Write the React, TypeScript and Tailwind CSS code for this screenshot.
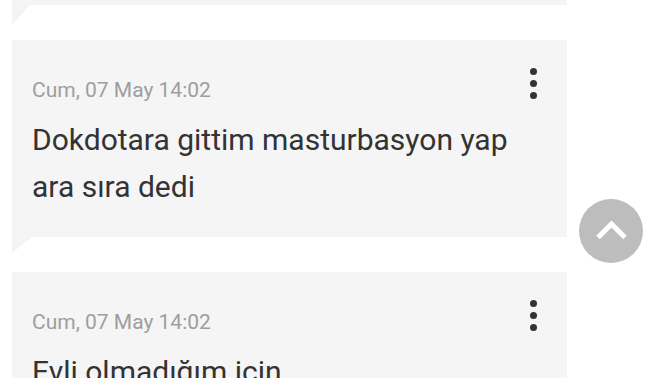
const POSTS = [
  {
    date: "Cum, 07 May 14:02",
    lines: ["Dokdotara gittim masturbasyon yap ara sıra dedi"],
  },
  {
    date: "Cum, 07 May 14:02",
    lines: ["Evli olmadığım için", "evlenince geçer dedi"],
  },
];

function Dots() {
  return (
    <div className="flex flex-col gap-[5px] -mt-[8px]">
      <span className="block h-[7px] w-[7px] rounded-full bg-[#333]" />
      <span className="block h-[7px] w-[7px] rounded-full bg-[#333]" />
      <span className="block h-[7px] w-[7px] rounded-full bg-[#333]" />
    </div>
  );
}

// the little folded corner under each card
function Flap() {
  return (
    <div className="absolute left-0 top-full h-0 w-0 border-t-[16px] border-r-[20px] border-t-[#f4f4f4] border-r-transparent" />
  );
}

function PostCard({ date, lines }: { date: string; lines: string[] }) {
  return (
    <div className="relative bg-[#f5f5f5] pt-[36px] pb-[27px] pl-[20px] pr-[30px]">
      <div className="flex items-start justify-between">
        <p className="text-[21px] leading-[28px] text-[#9e9e9e]">{date}</p>
        <Dots />
      </div>
      <div className="mt-[12px] pr-[20px] text-[30px] leading-[47px] text-[#333]">
        {lines.map((l) => (
          <p key={l}>{l}</p>
        ))}
      </div>
      <Flap />
    </div>
  );
}

export default function App() {
  return (
    <div
      className="relative h-[378px] w-[672px] overflow-hidden bg-white"
      style={{ fontFamily: "Roboto, 'Noto Sans', sans-serif" }}
    >
      <div className="flex w-[555px] flex-col gap-[35px] ml-[12px] -mt-[60px]">
        {/* previous card, mostly scrolled away */}
        <div className="relative h-[65px] bg-[#f5f5f5]">
          <div className="absolute left-0 top-full h-0 w-0 border-t-[20px] border-r-[18px] border-t-[#f4f4f4] border-r-transparent" />
        </div>
        {POSTS.map((post, i) => (
          <PostCard key={i} date={post.date} lines={post.lines} />
        ))}
      </div>

      {/* scroll to top */}
      <button className="absolute left-[579px] top-[199px] h-[64px] w-[64px] rounded-full bg-[#bdbdbd]">
        <svg viewBox="0 0 64 64" className="h-[64px] w-[64px]">
          <polyline
            points="19,38.5 32.5,25 46,38.5"
            fill="none"
            stroke="#fff"
            strokeWidth="5"
          />
        </svg>
      </button>
    </div>
  );
}
